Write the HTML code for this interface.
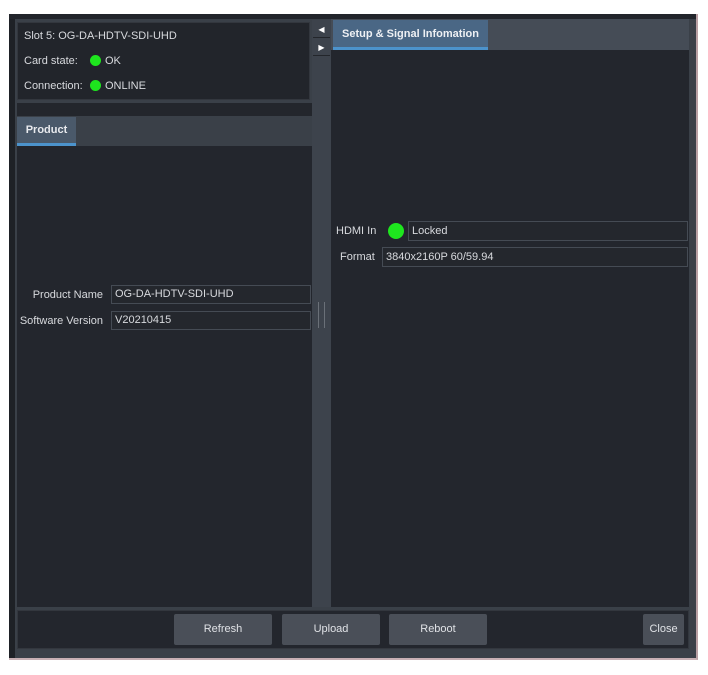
<!DOCTYPE html>
<html><head><style>
body{margin:0;width:708px;height:675px;background:#fff;position:relative;overflow:hidden;font-family:"Liberation Sans",sans-serif;font-size:11px;color:#d8dade}
div{position:absolute;box-sizing:border-box}
.dot{width:11px;height:11px;border-radius:50%;background:#1ee61e}
.fld{border:1px solid #454b54;background:#24272d;padding-left:3px;line-height:17px;color:#d8dade}
.btn{background:#4a4f58;border-radius:2px;text-align:center;line-height:31px;color:#e0e2e6;font-size:11px}
.lbl{text-align:right}
</style></head><body>
<div style="left:9px;top:14px;width:689px;height:646px;background:#3a4048;border-right:2px solid #b8a0a4;border-bottom:2px solid #c8b0b4"></div>
<div style="left:9px;top:14px;width:6px;height:644px;background:#1e2126"></div>
<div style="left:9px;top:14px;width:687px;height:5px;background:#22252b"></div>
<div style="left:17px;top:22px;width:293px;height:78px;background:#22252b;border:1px solid #33373e"></div>
<div style="left:24px;top:30px">Slot 5: OG-DA-HDTV-SDI-UHD</div>
<div style="left:24px;top:55px">Card state:</div>
<div class="dot" style="left:90px;top:55px"></div>
<div style="left:105px;top:55px">OK</div>
<div style="left:24px;top:80px">Connection:</div>
<div class="dot" style="left:90px;top:80px"></div>
<div style="left:105px;top:80px">ONLINE</div>
<div style="left:17px;top:103px;width:296px;height:13px;background:#23262c"></div>
<div style="left:17px;top:117px;width:59px;height:29px;background:#4a596a;border-bottom:3px solid #4c93cc;color:#e8eaee;font-weight:bold;font-size:11px;line-height:27px;text-align:center">Product</div>
<div style="left:17px;top:146px;width:295px;height:461px;background:#23262d"></div>
<div class="lbl" style="left:17px;top:289px;width:86px">Product Name</div>
<div class="fld" style="left:111px;top:285px;width:200px;height:19px">OG-DA-HDTV-SDI-UHD</div>
<div class="lbl" style="left:17px;top:315px;width:86px">Software Version</div>
<div class="fld" style="left:111px;top:311px;width:200px;height:19px">V20210415</div>
<div style="left:312px;top:20px;width:19px;height:587px;background:#3d434c"></div>
<div style="left:313px;top:21px;width:17px;height:17px;color:#fff;font-size:8px;text-align:center;line-height:17px;border-bottom:1px solid #23262b">◀</div>
<div style="left:313px;top:39px;width:17px;height:17px;color:#fff;font-size:8px;text-align:center;line-height:17px;border-bottom:1px solid #23262b">▶</div>
<div style="left:318px;top:302px;width:7px;height:26px;border-left:1px solid #6a7078;border-right:1px solid #6a7078"></div>
<div style="left:331px;top:19px;width:358px;height:31px;background:#454c56"></div>
<div style="left:333px;top:20px;width:155px;height:30px;background:#4a6785;border-bottom:3px solid #4c93cc;color:#eef0f4;font-weight:bold;font-size:11px;line-height:28px;text-align:center">Setup &amp; Signal Infomation</div>
<div style="left:331px;top:50px;width:358px;height:557px;background:#23262d"></div>
<div style="left:336px;top:225px">HDMI In</div>
<div class="dot" style="left:388px;top:223px;width:16px;height:16px"></div>
<div class="fld" style="left:408px;top:221px;width:280px;height:20px;line-height:18px">Locked</div>
<div style="left:340px;top:251px">Format</div>
<div class="fld" style="left:382px;top:247px;width:306px;height:20px;line-height:18px">3840x2160P 60/59.94</div>
<div style="left:17px;top:610px;width:672px;height:39px;background:#23262d;border:1px solid #33373e"></div>
<div class="btn" style="left:174px;top:614px;width:98px;height:31px">Refresh</div>
<div class="btn" style="left:282px;top:614px;width:98px;height:31px">Upload</div>
<div class="btn" style="left:389px;top:614px;width:98px;height:31px">Reboot</div>
<div class="btn" style="left:643px;top:614px;width:41px;height:31px">Close</div>
</body></html>
